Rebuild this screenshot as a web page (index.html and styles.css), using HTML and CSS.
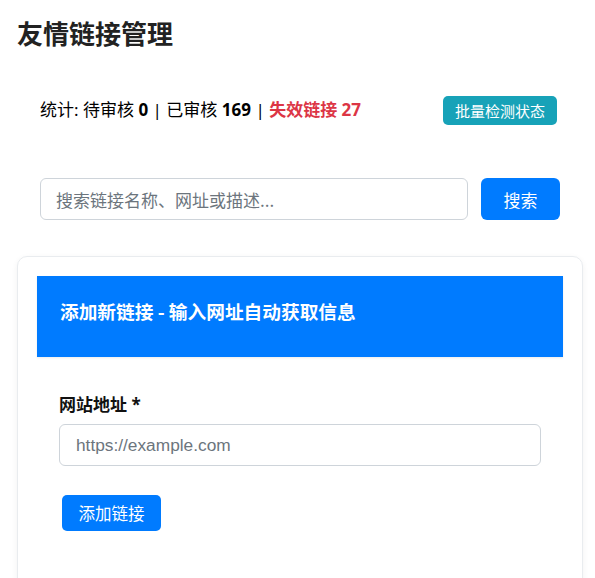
FILE: index.html
```html
<!DOCTYPE html>
<html lang="zh-CN">
<head>
<meta charset="utf-8">
<title>友情链接管理</title>
<link rel="stylesheet" href="styles.css">
</head>
<body>
<div class="page">
  <h1 class="title">友情链接管理</h1>
  <div class="stats-row">
    <div class="stats">统计: 待审核 <b>0</b> | 已审核 <b>169</b> | <span class="bad">失效链接 27</span></div>
    <button class="btn btn-info">批量检测状态</button>
  </div>
  <form class="search-row" onsubmit="return false">
    <input class="search-input" type="text" placeholder="搜索链接名称、网址或描述...">
    <button class="btn btn-primary btn-search">搜索</button>
  </form>
  <div class="card">
    <div class="card-header"><h3>添加新链接 - 输入网址自动获取信息</h3></div>
    <div class="card-body">
      <label class="label">网站地址 *</label>
      <input class="field" type="text" placeholder="https://example.com">
      <button class="btn btn-primary btn-add">添加链接</button>
    </div>
  </div>
</div>
</body>
</html>
```

FILE: styles.css
```css
* { box-sizing: border-box; }
html, body { margin: 0; padding: 0; background: #fff; }
body {
  font-family: "Noto Sans", "Noto Sans CJK SC", sans-serif;
  color: #212529;
  font-size: 16px;
}
.page { padding: 0 13px 0 17px; }
.title {
  margin: 0;
  padding-top: 16px;
  font-size: 26px;
  line-height: 34px;
  font-weight: 700;
  color: #222;
  font-family: "Noto Sans CJK SC", sans-serif;
}
.stats-row {
  display: flex;
  align-items: center;
  justify-content: space-between;
  margin-top: 44px;
  padding: 0 25px 0 23px;
  height: 32px;
}
.stats { font-size: 17px; line-height: 24px; color: #000; }
.stats b { font-weight: 700; }
.bad { color: #dc3545; font-weight: 700; }
.btn {
  border: 0;
  color: #fff;
  cursor: pointer;
  font-family: "Noto Sans CJK SC", sans-serif;
}
.btn-info {
  background: #17a2b8;
  font-size: 15px;
  height: 29px;
  width: 114px;
  padding: 0;
  border-radius: 5px;
  margin-top: 1px;
}
.btn-primary { background: #007bff; }
.search-row {
  display: flex;
  gap: 13px;
  margin: 52px 0 0 0;
  padding: 0 22px 0 23px;
}
.search-input {
  flex: 1;
  height: 42px;
  border: 1px solid #ced4da;
  border-radius: 6px;
  padding: 0 15px;
  font-size: 17px;
  font-family: "Noto Sans CJK SC", sans-serif;
  color: #495057;
}
.search-input::placeholder { color: #6c757d; }
.btn-search {
  width: 79px;
  height: 42px;
  border-radius: 6px;
  font-size: 17px;
}
.card {
  margin-top: 36px;
  border: 1px solid #e9ecef;
  border-radius: 10px;
  box-shadow: 0 2px 6px rgba(0,0,0,0.06);
  padding: 19px 19px 60px 19px;
  width: 566px;
}
.card-header {
  background: #007bff;
  padding: 22px 23px 33px 23px;
  box-shadow: 0 1px 2px rgba(0,0,0,0.08);
}
.card-header h3 {
  margin: 0;
  color: #fff;
  font-size: 18.7px;
  line-height: 26px;
  font-weight: 700;
  font-family: "Noto Sans CJK SC", sans-serif;
}
.card-body {
  padding: 36px 22px 0 22px;
  display: flex;
  flex-direction: column;
  align-items: flex-start;
}
.label {
  font-weight: 700;
  font-size: 17px;
  line-height: 24px;
  margin-bottom: 7px;
  color: #111;
}
.field {
  width: 100%;
  height: 42px;
  border: 1px solid #ced4da;
  border-radius: 6px;
  padding: 0 16px;
  font-size: 17.3px;
  font-family: "Liberation Sans", Arial, sans-serif;
}
.field::placeholder { color: #6c757d; }
.btn-add {
  margin: 29px 0 0 3px;
  width: 99px;
  height: 36px;
  border-radius: 5px;
  font-size: 16.5px;
}
```
